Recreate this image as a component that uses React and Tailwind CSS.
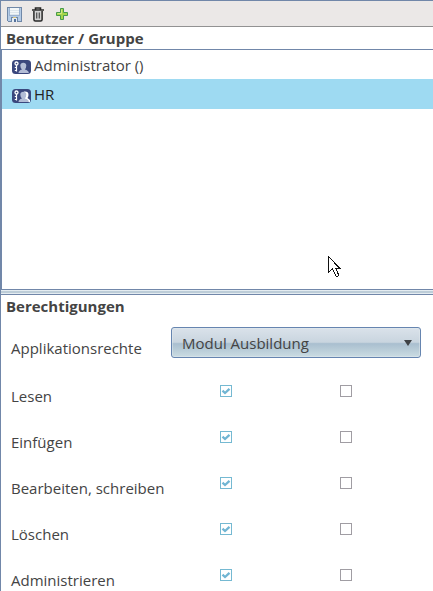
import React from 'react';

const rights = ['Lesen', 'Einfügen', 'Bearbeiten, schreiben', 'Löschen', 'Administrieren'];

function SaveIcon() {
  return (
    <svg width="15" height="15" viewBox="0 0 15 15" shapeRendering="crispEdges">
      <path d="M.5.5h14v14h-13l-1-1z" fill="#b4cbe6" stroke="#7088a8" />
      <path d="M3 1h9v7H3z" fill="#f2f6f8" />
      <path d="M3 3h9M3 5h9M3 7h9" stroke="#dce5ea" />
      <path d="M2.500 1v7.500h10V1" fill="none" stroke="#9bb2d0" />
      <path d="M4 10h7v5H4z" fill="#e5edf3" />
      <path d="M4.500 14.500v-4h6v4" fill="none" stroke="#6f88a8" />
      <path d="M7 12h2v3H7z" fill="#56719b" />
      <path d="M6 10h3v1H6z" fill="#d9c277" />
    </svg>
  );
}

function TrashIcon() {
  return (
    <svg width="12" height="15" viewBox="0 0 12 15">
      <path d="M3.500 2.500V1h5v1.500M0 3h12" fill="none" stroke="#292929" strokeWidth="1.600" />
      <path d="M1.900 4v8.500q0 1.500 1.500 1.500h5.200q1.500 0 1.500-1.500V4" fill="#d4d4d4" stroke="#292929" strokeWidth="1.500" />
      <path d="M4.700 5.500v6M7.300 5.500v6" stroke="#555" strokeWidth="1.300" />
    </svg>
  );
}

function PlusIcon() {
  return (
    <svg width="12" height="12" viewBox="0 0 12 12">
      <path d="M4.500.5h3v4h4v3h-4v4h-3v-4h-4v-3h4z" fill="#a5d64a" stroke="#459b4d" />
      <path d="M5.500 1.500v4h-4" fill="none" stroke="#d2e982" />
    </svg>
  );
}

function UserIcon({ active }) {
  return (
    <svg width="19" height="14" viewBox="0 0 19 14">
      <rect width="19" height="14" rx="3.500" fill="#3a477d" />
      <circle cx="4.500" cy="3.500" r="1.500" fill="none" stroke="#fff" strokeWidth="1.300" />
      <path d="M4.500 5v6.500M4.500 7.500H2.800M4.500 10.500H2.800" fill="none" stroke="#fff" strokeWidth="1.200" />
      {active && <path d="M12 2.500q4.500-.5 4.500 3.200 0 2-1 3.300l2.500 2v2h-5z" fill="#fff" />}
      <path d="M6.500 13q0-2.500 3.500-3.500Q8.300 8 8.300 5.500 8.500 2.700 11.300 2.700T14.300 5.500Q14.300 8 12.800 9.500q4 1 4 3.500z" fill="#b3bdd6" />
    </svg>
  );
}

function Checkbox({ checked }) {
  return (
    <span className={`block h-3 w-3 border bg-white ${checked ? 'border-[#75b9d2]' : 'border-[#a09da3]'}`}>
      {checked && (
        <svg className="block" width="10" height="10" viewBox="0 0 10 10">
          <path d="M1.500 4.700 4 7 8.500 2.800" fill="none" stroke="#70b5d3" strokeWidth="2.300" />
        </svg>
      )}
    </span>
  );
}

function UserRow({ name, active }) {
  return (
    <div className={`flex pl-[10px] ${active ? 'h-[30px] bg-[#9edaf2] text-[#222]' : 'h-[29px]'}`}>
      <span className="mt-[10px]"><UserIcon active={active} /></span>
      <span className="ml-[3px] leading-[30px]">{name}</span>
    </div>
  );
}

export default function App() {
  return (
    <div className="relative flex h-[591px] w-[433px] flex-col overflow-hidden border-l border-t border-[#7187a9] bg-white font-['Open_Sans',sans-serif] text-[15px] text-[#444]">
      <header className="flex h-[26px] shrink-0 border-b border-[#929292] bg-[#ebe8e7] pl-[6px]">
        <span className="mt-[6px] w-[25px]"><SaveIcon /></span>
        <span className="mt-[6px] w-[24px]"><TrashIcon /></span>
        <span className="mt-[7px]"><PlusIcon /></span>
      </header>
      <h2 className="h-[23px] shrink-0 border-b border-[#7187a9] pl-[5px] font-bold leading-[23px]">Benutzer / Gruppe</h2>
      <section className="h-[239px] shrink-0 border-l border-[#7187a9]">
        <UserRow name="Administrator ()" />
        <UserRow name="HR" active />
      </section>
      <div className="flex h-[6px] shrink-0 flex-col border-y border-[#7187a9] bg-[#e4ecf1] py-px">
        <div className="h-[2px] bg-[#bdcdd8]" />
      </div>
      <h2 className="h-[32px] shrink-0 pl-[5px] font-bold leading-[23px]">Berechtigungen</h2>
      <div className="flex h-[46px] shrink-0 pl-[10px]">
        <label className="w-[160px] pt-[11px] leading-[20px]">Applikationsrechte</label>
        <button className="flex h-[31px] w-[250px] items-center justify-between rounded-[3px] border border-[#6685b0] bg-[linear-gradient(180deg,#dae2ea_0%,#c9d5df_49%,#a9bfcf_54%,#cbdce2_100%)] pl-[10px] pr-[8px] shadow-[inset_0_0_0_1px_#e1e9ee80]">
          <span className="leading-[20px]">Modul Ausbildung</span>
          <svg width="8" height="6" viewBox="0 0 8 6"><path d="M0 0h8L4 6z" fill="#3f4245" /></svg>
        </button>
      </div>
      <div className="flex flex-col pt-[12px]">
        {rights.map((label) => (
          <div key={label} className="flex h-[46px] shrink-0 pl-[10px]">
            <label className="w-[209px] pt-[1px] leading-[20px]">{label}</label>
            <span className="w-[120px]"><Checkbox checked /></span>
            <Checkbox />
          </div>
        ))}
      </div>
      <svg className="absolute left-[327px] top-[255px]" width="13" height="21" viewBox="0 0 13 21" shapeRendering="crispEdges">
        <path d="M.5.5v16l4-4 3 7 1 1h1l1-1v-1l-3-6.500h4z" fill="#fff" stroke="#111" />
      </svg>
    </div>
  );
}
